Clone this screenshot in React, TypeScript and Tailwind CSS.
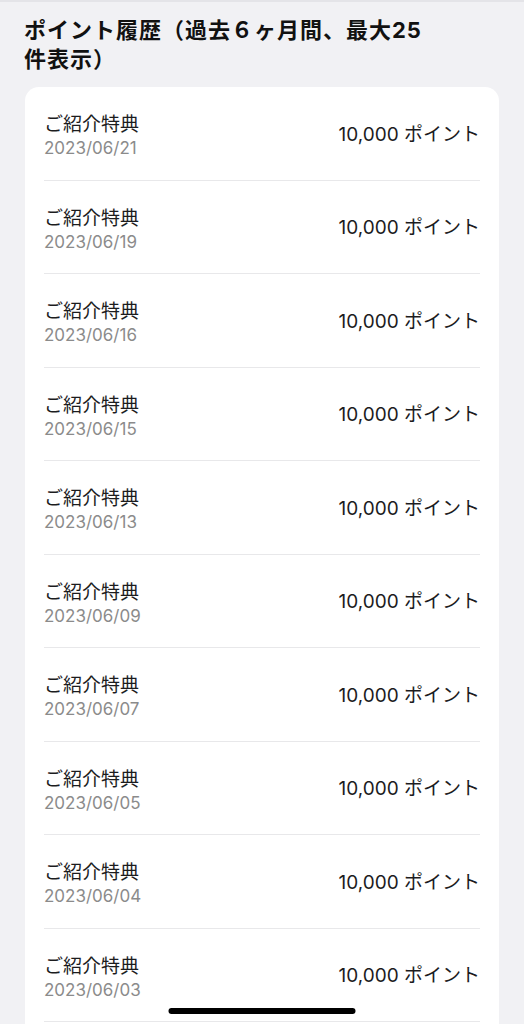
import React from 'react';

const history = [
  { title: 'ご紹介特典', date: '2023/06/21', points: '10,000' },
  { title: 'ご紹介特典', date: '2023/06/19', points: '10,000' },
  { title: 'ご紹介特典', date: '2023/06/16', points: '10,000' },
  { title: 'ご紹介特典', date: '2023/06/15', points: '10,000' },
  { title: 'ご紹介特典', date: '2023/06/13', points: '10,000' },
  { title: 'ご紹介特典', date: '2023/06/09', points: '10,000' },
  { title: 'ご紹介特典', date: '2023/06/07', points: '10,000' },
  { title: 'ご紹介特典', date: '2023/06/05', points: '10,000' },
  { title: 'ご紹介特典', date: '2023/06/04', points: '10,000' },
  { title: 'ご紹介特典', date: '2023/06/03', points: '10,000' },
];

export default function App() {
  return (
    <div
      className="min-h-screen bg-[#f1f1f4] border-t-2 border-[#e4e4e8] text-[#111111]"
      style={{ fontFamily: 'Inter, "Noto Sans CJK JP", sans-serif' }}
    >
      <h1 className="w-[452px] px-6 pt-[14px] text-[22px] leading-[29px] font-bold tracking-[1px]">
        ポイント履歴（過去６ヶ月間、最大25件表示）
      </h1>

      <div className="mx-[25px] mt-[13px] rounded-[14px] bg-white pb-6">
        {history.map((item, index) => (
          <div key={index} className="mx-[19px] flex h-[93.5px] border-b border-[#e8e8ea]">
            <div className="flex-1 pt-[26px]">
              <div className="text-[19px] leading-[24px] text-[#1c1c1e]">{item.title}</div>
              <div className="text-[17px] leading-[22px] text-[#8b8b8b]">{item.date}</div>
            </div>
            <div className="self-center pt-[3px] text-[19px] text-[#1c1c1e]">
              {item.points} ポイント
            </div>
          </div>
        ))}
      </div>

      <div className="fixed bottom-[10px] left-1/2 h-[6px] w-[187px] -translate-x-1/2 rounded-full bg-black" />
    </div>
  );
}
